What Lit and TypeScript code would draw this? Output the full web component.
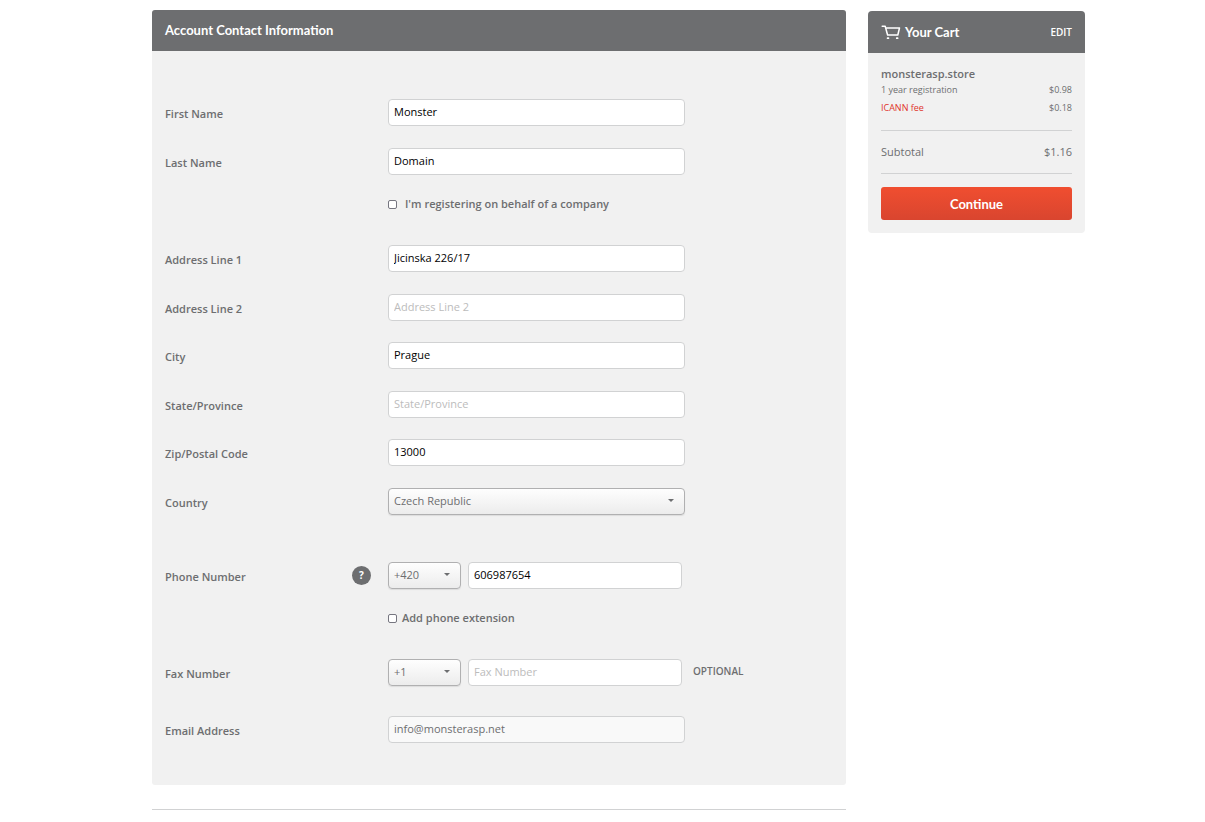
import { LitElement, html, css, nothing } from "lit";
import { customElement, property } from "lit/decorators.js";

const baseStyles = css`
  * { box-sizing: border-box; }
  input, select, button { font: inherit; margin: 0; }
`;

@customElement("drop-down")
class DropDown extends LitElement {
  @property() value = "";
  @property() label = "";
  static styles = [baseStyles, css`
    :host { display: grid; align-items: center; }
    .select {
      grid-area: 1 / 1;
      appearance: none;
      width: 100%;
      height: 27px;
      padding: 0 24px 2px 5px;
      border: 1px solid #b0b0b1;
      border-radius: 4px;
      background: linear-gradient(#fefefe, #ececec);
      box-shadow: 0 1px 1px #dcdcdc;
      color: #6d6e70;
      font-family: inherit;
      font-size: 11px;
    }
    .arrow {
      grid-area: 1 / 1;
      justify-self: end;
      margin: 0 11px 2px 0;
      width: 6px;
      height: 3px;
      fill: #6d6e70;
      pointer-events: none;
    }
  `];
  render() {
    return html`
      <select class="select" aria-label=${this.label}><option>${this.value}</option></select>
      <svg class="arrow" viewBox="0 0 6 3" aria-hidden="true"><path d="M0 0H6L3 3Z" /></svg>
    `;
  }
}

@customElement("contact-form")
class ContactForm extends LitElement {
  static styles = [baseStyles, css`
    :host { display: block; }
    .panel { background: #f1f1f1; border-radius: 3px; overflow: hidden; }
    .title {
      margin: 0;
      padding: 0 13px;
      background: #6d6e70;
      color: #fff;
      font-family: Lato, "Open Sans", sans-serif;
      font-size: 13px;
      font-weight: 700;
      line-height: 41px;
    }
    .body { padding: 48px 13px 42px; }
    .group { margin-bottom: 47px; }
    .names { margin-bottom: 33px; }
    .phone { margin-bottom: 33px; }
    .fax { margin-bottom: 30px; }
    .email { margin-bottom: 0; }
    .row { display: flex; align-items: center; height: 27px; }
    .row + .row { margin-top: 22px; }
    .row:nth-child(odd) { margin-top: 21px; }
    .group .row:first-child { margin-top: 0; }
    .side {
      display: flex;
      flex: 0 0 223px;
      align-items: center;
      justify-content: space-between;
      padding-right: 17px;
    }
    .label, .check { color: #6d6e70; font-size: 11px; font-weight: 600; line-height: 16px; }
    .label { padding-top: 3px; }
    .help {
      width: 19px;
      height: 19px;
      padding: 0;
      border: 0;
      border-radius: 50%;
      background: #6d6e70;
      color: #fff;
      font-size: 10px;
      font-weight: 700;
      line-height: 19px;
    }
    .field {
      flex: 0 1 297px;
      min-width: 0;
      height: 27px;
      padding: 0 5px 2px;
      border: 1px solid #d1d2d3;
      border-radius: 4px;
      background: #fff;
      color: #000;
      font-size: 11px;
    }
    .field::placeholder { color: #bcbcbc; opacity: 1; }
    .field:read-only { background: #f9f9f9; color: #6d6e70; }
    .number { flex-basis: 214px; }
    .country { flex: 0 1 297px; }
    .code { flex: 0 0 73px; margin-right: 7px; }
    .optional {
      margin-left: 11px;
      padding-bottom: 3px;
      color: #6d6e70;
      font-size: 10px;
      font-weight: 600;
    }
    .check {
      display: flex;
      align-items: center;
      gap: 8px;
      margin: 21px 0 0 223px;
    }
    .phone .check { gap: 5px; }
    .box {
      appearance: none;
      width: 9px;
      height: 9px;
      border: 1px solid #767680;
      border-radius: 2px;
      background: #fff;
    }
    .box:checked { background: #6d6e70; }
    .rule { margin: 24px 0 0; border: 0; border-top: 1px solid #d1d2d3; }
  `];
  row(id: string, label: string, value = "", readonly = false) {
    return html`<div class="row">
      <div class="side"><label class="label" for=${id}>${label}</label></div>
      <input class="field" id=${id} type="text" .value=${value}
        placeholder=${value ? nothing : label} ?readonly=${readonly} />
    </div>`;
  }
  render() {
    return html`
      <form class="panel">
        <h2 class="title">Account Contact Information</h2>
        <div class="body">
          <div class="group names">
            ${this.row("first", "First Name", "Monster")}
            ${this.row("last", "Last Name", "Domain")}
            <label class="check"><input class="box" type="checkbox" />I'm registering on behalf of a company</label>
          </div>
          <div class="group">
            ${this.row("address1", "Address Line 1", "Jicinska 226/17")}
            ${this.row("address2", "Address Line 2")}
            ${this.row("city", "City", "Prague")}
            ${this.row("state", "State/Province")}
            ${this.row("zip", "Zip/Postal Code", "13000")}
            <div class="row">
              <div class="side"><span class="label">Country</span></div>
              <drop-down class="country" label="Country" value="Czech Republic"></drop-down>
            </div>
          </div>
          <div class="group phone">
            <div class="row">
              <div class="side">
                <label class="label" for="phone">Phone Number</label>
                <button class="help" type="button">?</button>
              </div>
              <drop-down class="code" label="Phone country code" value="+420"></drop-down>
              <input class="field number" id="phone" type="tel" .value=${"606987654"} />
            </div>
            <label class="check"><input class="box" type="checkbox" />Add phone extension</label>
          </div>
          <div class="group fax">
            <div class="row">
              <div class="side"><label class="label" for="fax">Fax Number</label></div>
              <drop-down class="code" label="Fax country code" value="+1"></drop-down>
              <input class="field number" id="fax" type="tel" placeholder="Fax Number" />
              <span class="optional">OPTIONAL</span>
            </div>
          </div>
          <div class="group email">
            ${this.row("email", "Email Address", "info@monsterasp.net", true)}
          </div>
        </div>
      </form>
      <hr class="rule" />
    `;
  }
}

@customElement("cart-summary")
class CartSummary extends LitElement {
  static styles = [baseStyles, css`
    :host { display: block; padding-top: 1px; color: #6d6e70; }
    .card { border-radius: 4px; overflow: hidden; background: #f1f1f1; }
    .head {
      display: flex;
      align-items: center;
      height: 42px;
      padding: 0 13px;
      background: #6d6e70;
      color: #fff;
    }
    .cart { width: 20px; height: 16px; margin-right: 4px; fill: none; stroke: #fff; }
    .title {
      flex: 1;
      margin: 0;
      font-family: Lato, "Open Sans", sans-serif;
      font-size: 13px;
      font-weight: 700;
    }
    .edit { color: #fff; font-size: 10px; font-weight: 600; text-decoration: none; }
    .content { padding: 13px; }
    .domain { margin: 0; font-size: 11px; font-weight: 600; line-height: 16px; }
    .line { display: flex; justify-content: space-between; font-size: 9px; line-height: 16px; }
    .fee { margin-top: 2px; }
    .fee-name { color: #e0342b; }
    .subtotal {
      margin: 14px 0 13px;
      border: solid #d1d2d3;
      border-width: 1px 0;
      font-size: 11px;
      line-height: 42px;
    }
    .go {
      width: 100%;
      height: 33px;
      padding: 0;
      border: 0;
      border-radius: 3px;
      background: linear-gradient(#f04e30, #d9452f);
      color: #fff;
      font-family: Lato, "Open Sans", sans-serif;
      font-size: 13px;
      font-weight: 700;
    }
  `];
  render() {
    return html`
      <section class="card">
        <header class="head">
          <svg class="cart" viewBox="0 0 20 16" aria-hidden="true">
            <path stroke-width="1.5" stroke-linejoin="round" stroke-linecap="round" d="M1.2 2.2H4.2L6.6 11H16.8L18.5 4H5" />
            <path stroke-width="1.8" stroke-linecap="round" d="M6.6 14.2H7.4M15.8 14.2H16.6" />
          </svg>
          <h2 class="title">Your Cart</h2>
          <a class="edit" href="#">EDIT</a>
        </header>
        <div class="content">
          <h3 class="domain">monsterasp.store</h3>
          <div class="line"><span>1 year registration</span><span>$0.98</span></div>
          <div class="line fee"><span class="fee-name">ICANN fee</span><span>$0.18</span></div>
          <div class="line subtotal"><span>Subtotal</span><span>$1.16</span></div>
          <button class="go" type="button">Continue</button>
        </div>
      </section>
    `;
  }
}

@customElement("app-root")
class AppRoot extends LitElement {
  static styles = [baseStyles, css`
    :host {
      display: block;
      background: #fff;
      font-family: "Open Sans", "Noto Sans", sans-serif;
    }
    .page {
      display: grid;
      grid-template-columns: minmax(0, 1fr) 217px;
      gap: 22px;
      align-items: start;
      padding: 10px 120px 12px 152px;
    }
  `];
  render() {
    return html`<main class="page"><contact-form></contact-form><cart-summary></cart-summary></main>`;
  }
}
